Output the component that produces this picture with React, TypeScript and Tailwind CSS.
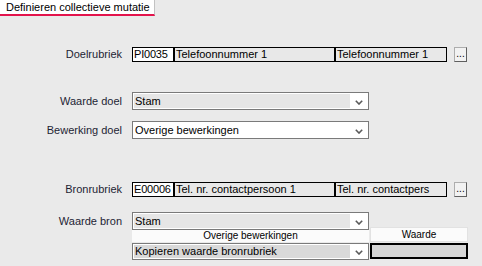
import React from "react";

const Chevron = () => (
  <svg width="8" height="5" viewBox="0 0 8 5">
    <path d="M0.8 0.8 L4 4 L7.2 0.8" stroke="#5a5a5a" strokeWidth="1.6" fill="none" />
  </svg>
);

interface SelectProps {
  value: string;
  fill?: string;
  className?: string;
}

const Select: React.FC<SelectProps> = ({ value, fill = "bg-white", className = "h-[18px]" }) => (
  <div className={`flex w-[237px] items-stretch border border-[#7a7a7a] bg-white p-px ${className}`}>
    <div className={`flex flex-1 items-center pl-[1px] text-black ${fill}`}>{value}</div>
    <div className="flex w-[17px] items-center justify-center pt-[2px]">
      <Chevron />
    </div>
  </div>
);

const Row: React.FC<{ label: string; className?: string; children: React.ReactNode }> = ({ label, className = "", children }) => (
  <div className={`flex items-center ${className}`}>
    <div className="w-[122px] text-right text-[#1e1e34]">{label}</div>
    <div className="ml-[10px] flex items-center">{children}</div>
  </div>
);

const Lookup: React.FC<{ code: string; name: string; short: string }> = ({ code, name, short }) => (
  <>
    <div className="flex h-[15px] w-[42px] items-center border border-black bg-white pl-[1px] tracking-[-0.2px] text-black">{code}</div>
    <div className="flex h-[15px] w-[161px] items-center border border-black bg-[#e8e8e8] pl-[1px] text-black">{name}</div>
    <div className="flex h-[15px] w-[112px] items-center overflow-hidden whitespace-nowrap border border-black bg-[#e8e8e8] pl-[1px] text-black">
      {short}
    </div>
    <div className="ml-[7px] flex h-[15px] w-[13px] items-end justify-center border border-[#adadad] border-b-[#5f5f5f] border-r-[#5f5f5f] bg-[#f2f2f2] pb-[2px] text-[10px] leading-none text-black">
      ...
    </div>
  </>
);

export default function App() {
  return (
    <div className="h-[266px] w-[482px] overflow-hidden bg-[#eaeaea] font-['Liberation_Sans',Arial,sans-serif] text-[11px] leading-none">
      <div className="flex h-[16px] w-[155px] items-center border-r border-b-2 border-r-[#c2c2c2] border-b-[#e3134c] bg-white pl-[6px] text-black">
        Definieren collectieve mutatie
      </div>

      <Row label="Doelrubriek" className="mt-[31px] h-[15px]">
        <Lookup code="PI0035" name="Telefoonnummer 1" short="Telefoonnummer 1" />
      </Row>

      <Row label="Waarde doel" className="mt-[30px]">
        <Select value="Stam" fill="bg-[#e6e6e6]" />
      </Row>

      <Row label="Bewerking doel" className="mt-[11px]">
        <Select value="Overige bewerkingen" />
      </Row>

      <Row label="Bronrubriek" className="mt-[43px] h-[15px]">
        <Lookup code="E00006" name="Tel. nr. contactpersoon 1" short="Tel. nr. contactpers" />
      </Row>

      <Row label="Waarde bron" className="mt-[15px]">
        <Select value="Stam" fill="bg-[#e6e6e6]" />
      </Row>

      <div className="ml-[132px] flex h-[12px] items-end text-[10px] text-black">
        <div className="flex h-[12px] w-[237px] items-center justify-center bg-[#fbfbfb]">Overige bewerkingen</div>
        <div className="ml-[1px] flex h-[15px] w-[98px] items-center justify-center border border-[#e2e2e2] bg-[#fbfbfb]">Waarde</div>
      </div>

      <div className="ml-[132px] mt-[1px] flex items-start">
        <Select value="Kopieren waarde bronrubriek" fill="bg-[#d9d9d9]" className="h-[17px]" />
        <div className="ml-[1px] h-[16px] w-[98px] border-2 border-black bg-[#d6d6d6]" />
      </div>
    </div>
  );
}
